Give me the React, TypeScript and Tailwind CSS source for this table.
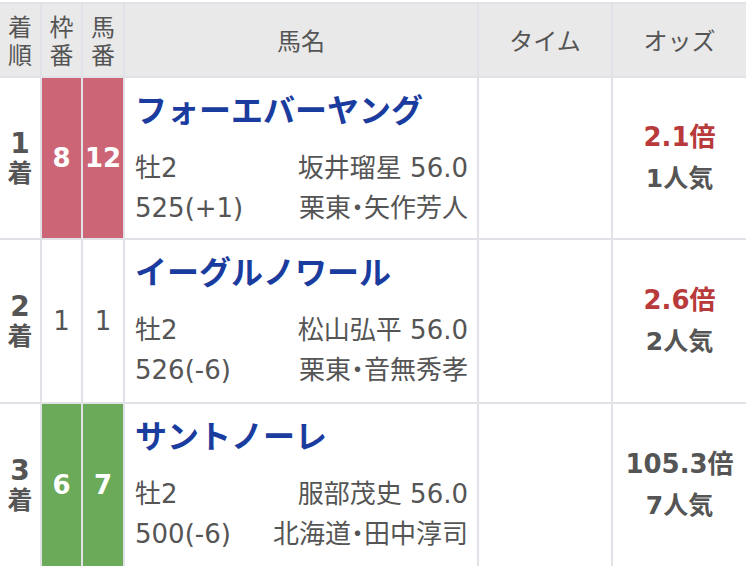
import React from "react";

type Row = {
  rank: string;
  waku: string;
  uma: string;
  color: "pink" | "white" | "green";
  name: string;
  sexAge: string;
  jockey: string;
  weight: string;
  stable: string;
  odds: string;
  pop: string;
  fav: boolean;
  h: string;
};

const rows: Row[] = [
  {
    rank: "1",
    waku: "8",
    uma: "12",
    color: "pink",
    name: "フォーエバーヤング",
    sexAge: "牡2",
    jockey: "坂井瑠星 56.0",
    weight: "525(+1)",
    stable: "栗東・矢作芳人",
    odds: "2.1倍",
    pop: "1人気",
    fav: true,
    h: "h-[160px]",
  },
  {
    rank: "2",
    waku: "1",
    uma: "1",
    color: "white",
    name: "イーグルノワール",
    sexAge: "牡2",
    jockey: "松山弘平 56.0",
    weight: "526(-6)",
    stable: "栗東・音無秀孝",
    odds: "2.6倍",
    pop: "2人気",
    fav: true,
    h: "h-[162px]",
  },
  {
    rank: "3",
    waku: "6",
    uma: "7",
    color: "green",
    name: "サントノーレ",
    sexAge: "牡2",
    jockey: "服部茂史 56.0",
    weight: "500(-6)",
    stable: "北海道・田中淳司",
    odds: "105.3倍",
    pop: "7人気",
    fav: false,
    h: "h-[162px]",
  },
];

const cjk = { fontFamily: '"Noto Sans CJK JP", "Noto Sans", sans-serif' };
const mixed = { fontFamily: '"DejaVu Sans", "Noto Sans CJK JP", sans-serif' };

function NumCell({ value, color }: { value: string; color: Row["color"] }) {
  const bg =
    color === "pink" ? "bg-[#cc6677]" : color === "green" ? "bg-[#6aaa58]" : "bg-white";
  const txt = color === "white" ? "text-[#555555] font-normal" : "text-white font-bold";
  return (
    <div className={`${bg} flex items-center justify-center`}>
      <span className={`${txt} text-[26px] leading-none`} style={mixed}>
        {value}
      </span>
    </div>
  );
}

export default function App() {
  return (
    <div className="w-[746px] h-[566px] overflow-hidden bg-white pt-[2px]" style={cjk}>
      <div className="grid grid-cols-[40px_39px_40px_352px_132px_1fr] gap-[2px] bg-[#e1e1e8] border-t-2 border-[#e1e1e8]">
        {/* header */}
        <div className="bg-[#e9e9e9] h-[72px] flex flex-col items-center justify-center text-[24px] leading-[28px] text-[#555555]">
          <span>着</span>
          <span>順</span>
        </div>
        <div className="bg-[#e9e9e9] h-[72px] flex flex-col items-center justify-center text-[24px] leading-[28px] text-[#555555]">
          <span>枠</span>
          <span>番</span>
        </div>
        <div className="bg-[#e9e9e9] h-[72px] flex flex-col items-center justify-center text-[24px] leading-[28px] text-[#555555]">
          <span>馬</span>
          <span>番</span>
        </div>
        <div className="bg-[#e9e9e9] h-[72px] flex items-center justify-center text-[24px] text-[#555555]">
          馬名
        </div>
        <div className="bg-[#e9e9e9] h-[72px] flex items-center justify-center text-[24px] text-[#555555]">
          タイム
        </div>
        <div className="bg-[#e9e9e9] h-[72px] flex items-center justify-center text-[24px] text-[#555555]">
          オッズ
        </div>

        {rows.map((r) => (
          <React.Fragment key={r.rank}>
            <div className={`bg-white ${r.h} flex flex-col items-center justify-center text-[#555555] font-bold pb-[2px]`}>
              <span className="text-[28px] leading-[28px]" style={mixed}>
                {r.rank}
              </span>
              <span className="text-[25px] leading-[26px]">着</span>
            </div>
            <NumCell value={r.waku} color={r.color} />
            <NumCell value={r.uma} color={r.color} />
            <div className={`bg-white ${r.h} flex flex-col pl-[10px] pr-[9px] pt-[10px]`}>
              <div className="text-[32px] leading-[40px] font-bold text-[#1a3c9e] whitespace-nowrap">
                {r.name}
              </div>
              <div
                className="mt-[20px] flex justify-between text-[26px] leading-[40px] text-[#555555] whitespace-nowrap [font-feature-settings:'halt']"
                style={mixed}
              >
                <span>{r.sexAge}</span>
                <span>{r.jockey}</span>
              </div>
              <div
                className="flex justify-between text-[26px] leading-[40px] text-[#555555] whitespace-nowrap [font-feature-settings:'halt']"
                style={mixed}
              >
                <span>{r.weight}</span>
                <span>{r.stable}</span>
              </div>
            </div>
            <div className={`bg-white ${r.h}`} />
            <div className={`bg-white ${r.h} flex flex-col items-center justify-center`} style={mixed}>
              <span
                className={`text-[26px] leading-[42px] font-bold ${
                  r.fav ? "text-[#b83a3a]" : "text-[#555555]"
                }`}
              >
                {r.odds}
              </span>
              <span className="text-[25px] leading-[42px] font-bold text-[#555555]">{r.pop}</span>
            </div>
          </React.Fragment>
        ))}
      </div>
    </div>
  );
}
